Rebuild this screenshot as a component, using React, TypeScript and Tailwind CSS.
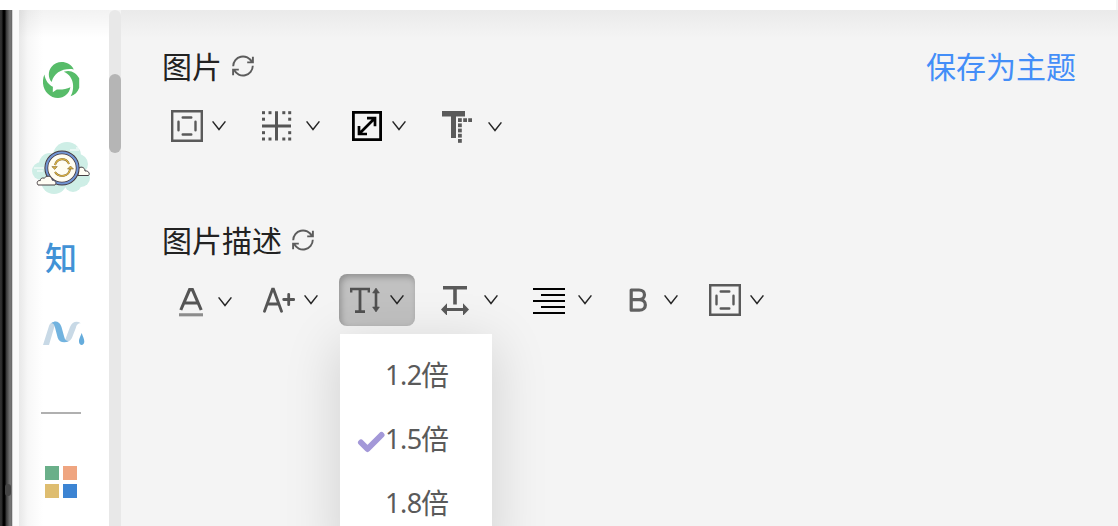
import type { ReactNode } from "react";

const cjk = "font-['Noto_Sans','Noto_Sans_CJK_SC',sans-serif]";

function Chevron({ className = "" }: { className?: string }) {
  return (
    <svg className={`h-3 w-4 shrink-0 ${className}`} viewBox="0 0 16 12" fill="none" stroke="#252525" strokeWidth="1.5">
      <path d="M1.6 1.4 8 9.5l6.4-8.1" />
    </svg>
  );
}

function Refresh() {
  return (
    <svg className="mb-0.5 h-6 w-6" viewBox="0 0 24 24" fill="none" stroke="#5c5c5c" strokeWidth="1.9">
      <path d="M2.2 12.2A9.8 9.8 0 0 1 20.8 8M21.8 11.8A9.8 9.8 0 0 1 3.2 16" />
      <path d="M21.9 2.8v5.6h-5.7M2.1 21.2v-5.6h5.7" />
    </svg>
  );
}

function FrameIcon() {
  return (
    <svg className="h-8 w-8 shrink-0" viewBox="0 0 32 32" fill="none" stroke="#5a5a5a" strokeWidth="2.4">
      <path d="M1.2 1.2h29.6v29.6H1.2z" />
      <path d="M11.7 7.5h8.6M11.7 24.5h8.6M7.5 11.7v8.6M24.5 11.7v8.6" strokeLinecap="round" />
    </svg>
  );
}

function BorderIcon() {
  return (
    <svg className="h-8 w-8 shrink-0" viewBox="0 0 32 32" fill="#555">
      <path d="M1 14.6h29v3H1zM14 1.2h3v29.4h-3z" />
      {[1, 7.5, 21.3, 27.2].map((x) => (
        <g key={x}>
          <rect x={x} y="1.2" width="3" height="3" />
          <rect x={x} y="27.5" width="3" height="3" />
        </g>
      ))}
      {[7.7, 21.2].map((y) => (
        <g key={y}>
          <rect x="1" y={y} width="3" height="3" />
          <rect x="27.2" y={y} width="3" height="3" />
        </g>
      ))}
    </svg>
  );
}

function ResizeIcon() {
  return (
    <svg className="h-[30px] w-[30px] shrink-0" viewBox="0 0 30 30" fill="none" stroke="#000">
      <path d="M1.4 1.4h27.2v27.2H1.4z" strokeWidth="2.8" />
      <path d="M7 23 23 7M15 7.2h8v8M7 15v8h8" strokeWidth="2.7" />
    </svg>
  );
}

function TextShadowIcon() {
  return (
    <svg className="h-8 w-[30px] shrink-0" viewBox="0 0 30 32" fill="#5a5a5a">
      <path d="M0 0h23v5.6h-9V27H9V5.6H0z" />
      {[7.2, 12.4, 17.6, 22.8, 28].map((y) => (
        <rect key={y} x="16" y={y} width="3.8" height="3.8" />
      ))}
      <path d="M21.2 7.2H25V11h-3.8zM26.2 7.2H30V11h-3.8z" />
    </svg>
  );
}

function ColorIcon() {
  return (
    <svg className="h-[30px] w-6 shrink-0" viewBox="0 0 24 30" fill="none" stroke="#555" strokeWidth="3.1">
      <path d="M1.8 23 10.6 2.6h2.8L22.2 23M5 16h14" />
      <path d="M0 27.8h24" stroke="#8c8c8c" />
    </svg>
  );
}

function SizeIcon() {
  return (
    <svg className="h-7 w-8 shrink-0" viewBox="0 0 32 28" fill="none" stroke="#555" strokeWidth="2.8" strokeLinecap="round">
      <path d="M1.5 25.3 9.5 3.2h1l8 22.1M4.5 18h11" />
      <path d="M20.7 13.5h10M25.7 8.5v10.2" />
    </svg>
  );
}

function LineHeightIcon() {
  return (
    <svg className="h-7 w-[30px] shrink-0" viewBox="0 0 30 28" fill="none" stroke="#505050" strokeWidth="2.4">
      <path d="M1.2 6.5V3h17.6v3.5" />
      <path d="M10 3v22.6M5 25.6h10" strokeWidth="2.8" />
      <path d="M26 6v15" strokeWidth="2.6" />
      <path d="m26 2 3.4 5h-6.8ZM26 26l3.4-5h-6.8Z" fill="#505050" strokeWidth=".6" />
    </svg>
  );
}

function LetterSpacingIcon() {
  return (
    <svg className="h-[30px] w-7 shrink-0" viewBox="0 0 28 30" fill="#5a5a5a">
      <path d="M2 1h24v3.6H15.8v14.8h-3.6V4.6H2zM0 24.5l6-6.2v4.7h16v-4.7l6 6.2-6 6.2V26H6v4.7z" />
    </svg>
  );
}

function AlignIcon() {
  return (
    <svg className="mt-0.5 h-[26px] w-8 shrink-0" viewBox="0 0 32 26" stroke="#000" strokeWidth="2">
      <path d="M0 1h32M8 7h24M0 13h32M8 19h24M0 25h32" />
    </svg>
  );
}

function BoldIcon() {
  return (
    <svg className="h-6 w-[19px] shrink-0" viewBox="0 0 19 24" fill="none" stroke="#606060" strokeWidth="3.2" strokeLinejoin="round">
      <path d="M2.2 2H10c7.3 0 7.3 9.6 0 9.6H2.2zM2.2 11.6h8c8.2 0 8.2 10.6 0 10.6h-8z" />
    </svg>
  );
}

function GreenLogo() {
  return (
    <svg className="h-[38px] w-[38px]" viewBox="0 0 38 38" fill="#57bc69">
      <path d="M8.7 21C5 17.5 4.8 10.5 8.4 6 14-1.2 26-.5 30.8 8.4 20.5 6.8 10.8 11.5 8.7 21Z" />
      <path d="M20.8 10.7C27.5 8.3 33 11.5 36.2 17.3v9.5C34.8 31 31.8 34.2 27.6 35.3 31.5 29 32.2 15.8 20.8 10.7Z" />
      <path d="M1.4 13.6C2.5 19.5 5.5 24 9.9 25.8l-.1 5.4 4-2.7c4.8.4 9.4-.3 13.6-2.2C26.2 32.8 21 37 15 37 4.5 37-3.5 25.5 1.4 13.6Z" />
    </svg>
  );
}

function CloudLogo() {
  return (
    <svg className="h-[54px] w-[60px]" viewBox="0 0 60 54" fill="none">
      <g fill="#ceeee6">
        <circle cx="35" cy="14" r="14" />
        <circle cx="18" cy="22" r="11" />
        <circle cx="9" cy="29" r="9" />
        <circle cx="46" cy="22" r="10" />
        <circle cx="49" cy="36" r="9" />
        <circle cx="22" cy="39" r="13" />
        <circle cx="41" cy="41" r="9" />
      </g>
      <path d="M38 8h9M44 6h6M2 26h10M5 29h6" stroke="#fff" strokeWidth="1.2" />
      <path d="M46 33.5h10.5c2-2-.4-5.2-3.5-4.5 0-4-5.2-5.5-7-1.6z" fill="#fffdf4" stroke="#473f43" />
      <circle cx="30" cy="26" r="15.7" fill="#fffdf2" stroke="#473b40" strokeWidth="3.8" />
      <circle cx="30" cy="26" r="15.6" stroke="#7195d4" strokeWidth="2" />
      <path d="M23 23c2-7 11-8 14-1M38 27c-1 8-11 9-15 3" stroke="#745a2d" strokeWidth="1.9" />
      <path d="M23 23c2-7 11-8 14-1M38 27c-1 8-11 9-15 3" stroke="#d9b244" strokeWidth="1.3" />
      <path d="m19.8 24.6 2.9 2.8 2.6-2.8zM35.5 27l3-3 3 3z" fill="#d9b244" stroke="#80662f" strokeWidth=".6" />
      <path d="M6 43h17c2-2 .5-4.7-2.7-4.8-.6-4.1-4.8-5.5-8-2.1-2.6-.6-4 .7-4 2.5C5 38.1 4.5 41 6 43Z" fill="#fffdf4" stroke="#473f43" />
    </svg>
  );
}

function WaveLogo() {
  return (
    <svg className="h-6 w-[42px]" viewBox="0 0 42 24" fill="none">
      <path d="M0 24 6 5C7 1.5 10 .4 15 .8 12.5 2 11.8 4 11 7L6 24Z" fill="#c8d9e6" />
      <path d="M22.5 18 27 6c2-5.3 7-6.6 10.8-3.8-3.2 0-4 1.5-5 4.7l-3.5 9C27.5 20 25 21 21.7 21Z" fill="#c8d9e6" />
      <path d="M8 2.4C13-1.2 17 1 18.5 6l2.7 9.8c.8 3.3 2 4.3 4.6 4.2-4.6 2.8-9.8 1.1-11.1-3.3L12 6.5C11.2 3.4 10 1.8 8 2.4Z" fill="#72b3df" />
      <path d="M38.7 12c-2 5-2.7 6-2.7 8.5 0 4.5 5.3 4.5 5.3 0 0-2.5-1.3-4.5-2.6-8.5Z" fill="#65acdc" />
    </svg>
  );
}

function Sidebar() {
  return (
    <aside className="flex h-full w-[90px] shrink-0 flex-col bg-[linear-gradient(to_bottom,#0000000d,transparent_28px),linear-gradient(to_right,#e8e8e8,#f7f7f7_9px,#fff_24px)]">
      <div className="mt-[51px] ml-6"><GreenLogo /></div>
      <div className="mt-[43px] ml-[13px]"><CloudLogo /></div>
      <div className="mt-11 ml-[26px] h-9 text-[32px] leading-9 font-medium text-[#4292d6]">知</div>
      <div className="mt-[45px] ml-6"><WaveLogo /></div>
      <div className="mt-[67px] ml-[22px] h-0.5 w-10 shrink-0 bg-[#b0b0b0]" />
      <div className="mt-[52px] ml-[26px] grid w-8 grid-cols-2 gap-1">
        <i className="h-3.5 w-3.5 bg-[#6aaf89]" />
        <i className="h-3.5 w-3.5 bg-[#efa580]" />
        <i className="h-3.5 w-3.5 bg-[#debd70]" />
        <i className="h-3.5 w-3.5 bg-[#3c84d3]" />
      </div>
    </aside>
  );
}

function Tool({ children, className = "", chevron }: { children: ReactNode; className?: string; chevron: string }) {
  return (
    <button className={`flex h-[52px] shrink-0 items-center ${className}`}>
      {children}
      <Chevron className={chevron} />
    </button>
  );
}

function LineHeightMenu() {
  return (
    <div className="absolute top-[60px] left-px z-10 w-[152px] bg-white pt-2 pb-4 shadow-[0_12px_50px_4px_#00000022]">
      {["1.2", "1.5", "1.8"].map((value) => (
        <div key={value} className="flex h-16 items-center pl-[17px] text-[28px] leading-none text-[#5a5a5a]">
          <span className="flex w-7 shrink-0 pt-2">
            {value === "1.5" && (
              <svg className="h-[22px] w-7" viewBox="0 0 28 22" fill="none" stroke="#a398d8" strokeWidth="6" strokeLinecap="round" strokeLinejoin="round">
                <path d="m4 11.5 6.5 6.5L24.5 4" />
              </svg>
            )}
          </span>
          <span className="w-9 text-[27px] tracking-[-0.5px]">{value}</span>
          <span className="pt-px">倍</span>
        </div>
      ))}
    </div>
  );
}

export default function App() {
  return (
    <div className={`flex h-[526px] w-[1118px] flex-col overflow-hidden bg-[#f4f4f4] ${cjk}`}>
      <div className="z-20 h-2.5 w-[1116px] shrink-0 bg-white" />
      <div className="flex min-h-0 flex-1">
        <div className="flex w-[19px] shrink-0 flex-col bg-[linear-gradient(to_right,#333_0,#292929_2px,#000_3px,#000_5px,#333_6px,#555_8px,#777_10px,#666_12px,#ccc_12px,#ddd_13px,#fafafa_13px)]">
          <i className="mt-[474px] ml-[5px] h-3 w-1.5 rounded-sm bg-[#444]" />
        </div>
        <Sidebar />
        <div className="h-full w-3 shrink-0 rounded-t-full bg-[#e8e8e8] pt-16">
          <div className="h-[79px] w-3 rounded-full bg-[#b5b5b5]" />
        </div>
        <main className="relative min-w-0 flex-1 bg-[linear-gradient(to_bottom,#eaeaea,#f4f4f4_28px)] pt-[37px] pl-[41px] text-[#222]">
          <header className="flex h-10 items-center justify-between pr-[42px]">
            <h2 className="flex items-center text-[30px] leading-10 font-normal">
              <span className="mr-[9px]">图片</span>
              <Refresh />
            </h2>
            <a className="text-[30px] leading-10 text-[#438ef8]">保存为主题</a>
          </header>
          <div className="mt-[13px] flex h-[52px] items-center">
            <Tool className="ml-[9px]" chevron="ml-2"><FrameIcon /></Tool>
            <Tool className="ml-[34px]" chevron="ml-3"><BorderIcon /></Tool>
            <Tool className="ml-[31px]" chevron="ml-[9px]"><ResizeIcon /></Tool>
            <Tool className="ml-[35px] pt-0.5" chevron="ml-[15px]"><TextShadowIcon /></Tool>
          </div>
          <h2 className="mt-[69px] flex h-10 items-center text-[30px] leading-10 font-normal">
            <span className="mr-[9px]">图片描述</span>
            <Refresh />
          </h2>
          <div className="mt-[13px] flex h-[52px] items-center">
            <Tool className="ml-[17px] pt-1" chevron="ml-3.5"><ColorIcon /></Tool>
            <Tool className="ml-[30px]" chevron="ml-2"><SizeIcon /></Tool>
            <div className="relative ml-5">
              <Tool className="w-[76px] rounded-lg bg-[#c1c1c1] pl-[11px] shadow-[inset_2px_3px_6px_#00000040]" chevron="ml-[9px]"><LineHeightIcon /></Tool>
              <LineHeightMenu />
            </div>
            <Tool className="ml-[26px]" chevron="ml-3.5"><LetterSpacingIcon /></Tool>
            <Tool className="ml-[34px]" chevron="ml-3"><AlignIcon /></Tool>
            <Tool className="ml-9" chevron="ml-[15px]"><BoldIcon /></Tool>
            <Tool className="ml-[30px]" chevron="ml-2"><FrameIcon /></Tool>
          </div>
        </main>
      </div>
    </div>
  );
}
